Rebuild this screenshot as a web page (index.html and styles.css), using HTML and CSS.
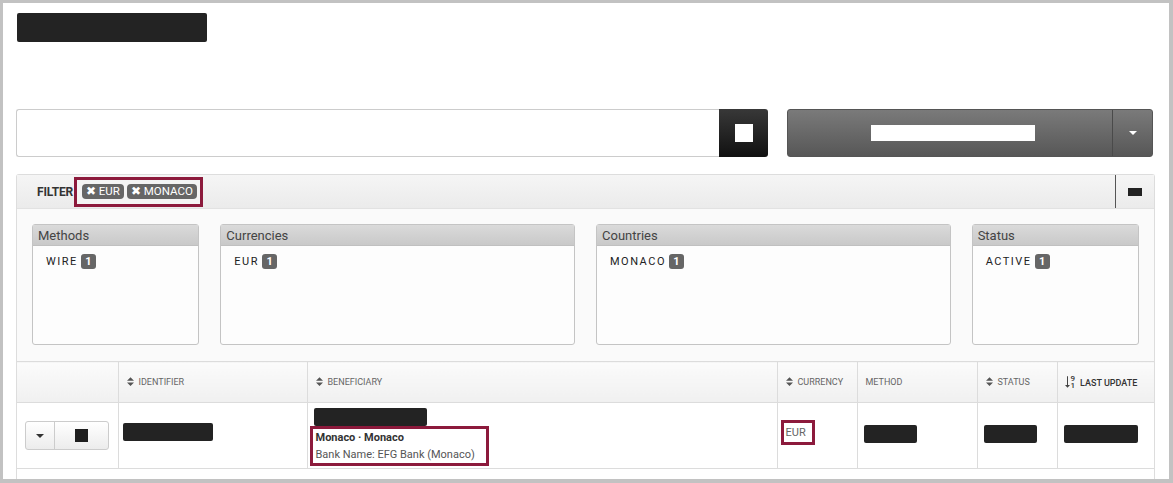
FILE: index.html
```html
<!DOCTYPE html>
<html lang="en">
<head>
    <meta charset="UTF-8">
    <title>Beneficiaries</title>
    <link rel="stylesheet" href="styles.css">
</head>
<body>
<div class="frame">
    <div class="page-title"></div>

    <div class="search-row">
        <div class="search">
            <input type="text" class="search-input">
            <button class="search-btn"><span class="sq"></span></button>
        </div>
        <div class="main-btn">
            <span class="main-label"></span>
            <span class="main-caret"><span class="caret white"></span></span>
        </div>
    </div>

    <div class="filter-panel">
        <div class="filter-head">
            <span class="filter-title">FILTER</span>
            <span class="hl chips">
                <span class="chip">&#10006; EUR</span>
                <span class="chip">&#10006; MONACO</span>
            </span>
            <span class="filter-toggle"><span class="mini"></span></span>
        </div>
        <div class="filter-body">
            <div class="facet narrow">
                <div class="facet-head">Methods</div>
                <div class="facet-item">WIRE <span class="badge">1</span></div>
            </div>
            <div class="facet wide">
                <div class="facet-head">Currencies</div>
                <div class="facet-item">EUR <span class="badge">1</span></div>
            </div>
            <div class="facet wide">
                <div class="facet-head">Countries</div>
                <div class="facet-item">MONACO <span class="badge">1</span></div>
            </div>
            <div class="facet narrow">
                <div class="facet-head">Status</div>
                <div class="facet-item">ACTIVE <span class="badge">1</span></div>
            </div>
        </div>
    </div>

    <div class="table-wrap">
        <table class="grid">
            <colgroup>
                <col style="width:101px">
                <col style="width:189px">
                <col style="width:470px">
                <col style="width:80px">
                <col style="width:120px">
                <col style="width:80px">
                <col>
            </colgroup>
            <thead>
                <tr>
                    <th></th>
                    <th><svg class="sort" viewBox="0 0 8 10"><path d="M4 0L8 4H0z M4 10L0 6H8z"/></svg>IDENTIFIER</th>
                    <th><svg class="sort" viewBox="0 0 8 10"><path d="M4 0L8 4H0z M4 10L0 6H8z"/></svg>BENEFICIARY</th>
                    <th><svg class="sort" viewBox="0 0 8 10"><path d="M4 0L8 4H0z M4 10L0 6H8z"/></svg>CURRENCY</th>
                    <th>METHOD</th>
                    <th><svg class="sort" viewBox="0 0 8 10"><path d="M4 0L8 4H0z M4 10L0 6H8z"/></svg>STATUS</th>
                    <th class="active"><span class="num-sort"><svg viewBox="0 0 6 14"><path d="M2.4 0h1.2v10.5H6L3 14 0 10.5h2.4z"/></svg><span class="digits"><span>9</span><span>1</span></span></span>LAST UPDATE</th>
                </tr>
            </thead>
            <tbody>
                <tr>
                    <td class="c-act">
                        <div class="act-group">
                            <span class="act-caret"><span class="caret"></span></span>
                            <span class="act-main"><span class="sq dark"></span></span>
                        </div>
                    </td>
                    <td><div class="redact up" style="width:90px"></div></td>
                    <td class="c-ben">
                        <div class="redact" style="width:113px"></div>
                        <div class="hl ben-info">
                            <b>Monaco &middot; Monaco</b>
                            <span>Bank Name: EFG Bank (Monaco)</span>
                        </div>
                    </td>
                    <td><span class="hl cur">EUR</span></td>
                    <td><div class="redact" style="width:53px"></div></td>
                    <td><div class="redact" style="width:53px"></div></td>
                    <td><div class="redact" style="width:74px"></div></td>
                </tr>
            </tbody>
        </table>
    </div>
</div>
</body>
</html>
```

FILE: styles.css
```css
body {
    margin: 0;
    padding: 0;
    background: #fff;
    font-family: Roboto, "Open Sans", sans-serif;
    color: #333;
}
.frame {
    box-sizing: border-box;
    width: 1173px;
    height: 483px;
    border: 3px solid #c2c2c2;
    border-right-width: 4px;
    border-bottom-width: 4px;
    padding: 10px 14px 0 13px;
    overflow: hidden;
}
.page-title {
    width: 190px;
    height: 29px;
    margin-left: 1px;
    background: #232323;
    border-radius: 2px;
}

/* search row */
.search-row {
    display: flex;
    margin-top: 67px;
    height: 48px;
}
.search {
    display: flex;
    width: 752px;
}
.search-input {
    flex: 1;
    box-sizing: border-box;
    height: 48px;
    margin: 0;
    border: 1px solid #ccc;
    border-right: none;
    border-radius: 3px 0 0 3px;
    outline: none;
}
.search-btn {
    width: 49px;
    height: 48px;
    border: none;
    border-radius: 0 3px 3px 0;
    background: linear-gradient(#383838, #111);
    display: flex;
    align-items: center;
    justify-content: center;
    padding: 0;
}
.sq {
    display: block;
    width: 18px;
    height: 18px;
    background: #fff;
}
.sq.dark {
    width: 13px;
    height: 13px;
    background: #1e1e1e;
}
.main-btn {
    display: flex;
    width: 366px;
    margin-left: 19px;
    border-radius: 3px;
    background: linear-gradient(#7a7a7a, #575757);
    border: 1px solid #555;
    box-sizing: border-box;
}
.main-label {
    flex: 1;
    display: flex;
    align-items: center;
    justify-content: center;
}
.main-label::before {
    content: "";
    width: 164px;
    height: 16px;
    background: #fff;
    margin-left: 6px;
}
.main-caret {
    width: 39px;
    border-left: 1px solid #4a4a4a;
    display: flex;
    align-items: center;
    justify-content: center;
}
.caret {
    width: 0;
    height: 0;
    border-left: 4px solid transparent;
    border-right: 4px solid transparent;
    border-top: 4px solid #333;
}
.caret.white {
    border-top-color: #fff;
}

/* filter panel */
.filter-panel {
    margin-top: 17px;
    border: 1px solid #ddd;
    border-bottom: none;
    border-radius: 3px 3px 0 0;
    background: #fafafa;
}
.filter-head {
    display: flex;
    align-items: center;
    height: 33px;
    padding-left: 20px;
    background: linear-gradient(#f5f5f5, #ebebeb);
    border-bottom: 1px solid #e2e2e2;
}
.filter-title {
    font-size: 12px;
    font-weight: bold;
    color: #333;
    letter-spacing: -0.2px;
}
.hl {
    border: 3px solid #8c1a3c;
}
.chips {
    display: flex;
    gap: 3px;
    margin-left: 1px;
    padding: 4px 3px 5px 5px;
    background: #f4f4f4;
}
.chip {
    display: inline-block;
    padding: 0 4px;
    height: 15px;
    line-height: 15px;
    font-size: 11.5px;
    color: #fff;
    background: #666;
    border-radius: 4px;
}
.filter-toggle {
    margin-left: auto;
    align-self: stretch;
    width: 38px;
    border-left: 1px solid #555;
    display: flex;
    align-items: center;
    justify-content: center;
}
.mini {
    width: 14px;
    height: 8px;
    background: #222;
}
.filter-body {
    display: flex;
    gap: 21px;
    padding: 15px 15px 16px 15px;
}
.facet {
    height: 119px;
    border: 1px solid #c4c4c4;
    border-radius: 3px;
    background: #fdfdfd;
}
.facet.narrow {
    width: 166px;
}
.facet.wide {
    width: 354px;
}
.facet-head {
    height: 20px;
    line-height: 21px;
    padding-left: 5px;
    font-size: 13px;
    color: #444;
    background: linear-gradient(#dadada, #c9c9c9);
    border-bottom: 1px solid #c0c0c0;
}
.facet-item {
    margin: 8px 0 0 13px;
    font-size: 11px;
    letter-spacing: 1.5px;
    color: #222;
    display: flex;
    align-items: center;
    gap: 3px;
}
.badge {
    display: inline-block;
    width: 15px;
    height: 15px;
    line-height: 15px;
    text-align: center;
    letter-spacing: 0;
    font-size: 11px;
    font-weight: bold;
    color: #fff;
    background: #666;
    border-radius: 3px;
}

/* table */
.table-wrap {
    height: 200px;
    border-left: 1px solid #ddd;
    border-right: 1px solid #ddd;
}
.grid {
    width: 100%;
    border-collapse: collapse;
    table-layout: fixed;
}
.grid th,
.grid td {
    border: 1px solid #dcdcdc;
    padding: 0 6px;
    text-align: left;
}
.grid tr > :first-child {
    border-left: none;
}
.grid tr > :last-child {
    border-right: none;
}
.grid th {
    height: 40px;
    padding-left: 8px;
    font-size: 9px;
    font-weight: normal;
    color: #666;
    background: linear-gradient(#fbfbfb, #f0f0f0);
    white-space: nowrap;
}
.grid th.active {
    color: #333;
    font-weight: 500;
    padding-left: 7px;
}
.sort {
    width: 7px;
    height: 9px;
    fill: #555;
    margin-right: 5px;
    vertical-align: -1px;
}
.num-sort {
    display: inline-flex;
    align-items: center;
    margin-right: 5px;
    vertical-align: -3px;
}
.num-sort svg {
    width: 5px;
    height: 14px;
    fill: #444;
}
.digits {
    display: flex;
    flex-direction: column;
    font-size: 8px;
    line-height: 7px;
    margin-left: 1px;
}
.grid td {
    height: 60px;
    font-size: 11px;
}
.grid td.c-act {
    padding-left: 8px;
}
.act-group {
    display: flex;
    width: 84px;
    height: 29px;
    box-sizing: border-box;
    border: 1px solid #ccc;
    border-radius: 3px;
    background: linear-gradient(#fff, #ececec);
}
.act-caret {
    width: 28px;
    border-right: 1px solid #ccc;
    display: flex;
    align-items: center;
    justify-content: center;
}
.act-main {
    flex: 1;
    display: flex;
    align-items: center;
    justify-content: center;
}
.redact {
    height: 18px;
    margin-top: -3px;
    background: #232323;
    border-radius: 2px;
}
.redact.up {
    margin-top: -8px;
    margin-left: -2px;
}
.grid td.c-ben {
    vertical-align: top;
    padding-top: 5px;
}
.grid td.c-ben .redact {
    margin-top: 0;
}
.ben-info {
    display: inline-flex;
    flex-direction: column;
    margin-left: -4px;
    padding: 0 11px 0 3px;
    line-height: 17px;
    background: #fff;
}
.ben-info b {
    color: #333;
    font-weight: bold;
}
.ben-info span {
    color: #555;
}
.cur {
    display: inline-block;
    margin-left: -3px;
    margin-top: -8px;
    padding: 3px 6px 3px 2px;
    font-size: 11px;
    color: #666;
    background: #fff;
}
```
